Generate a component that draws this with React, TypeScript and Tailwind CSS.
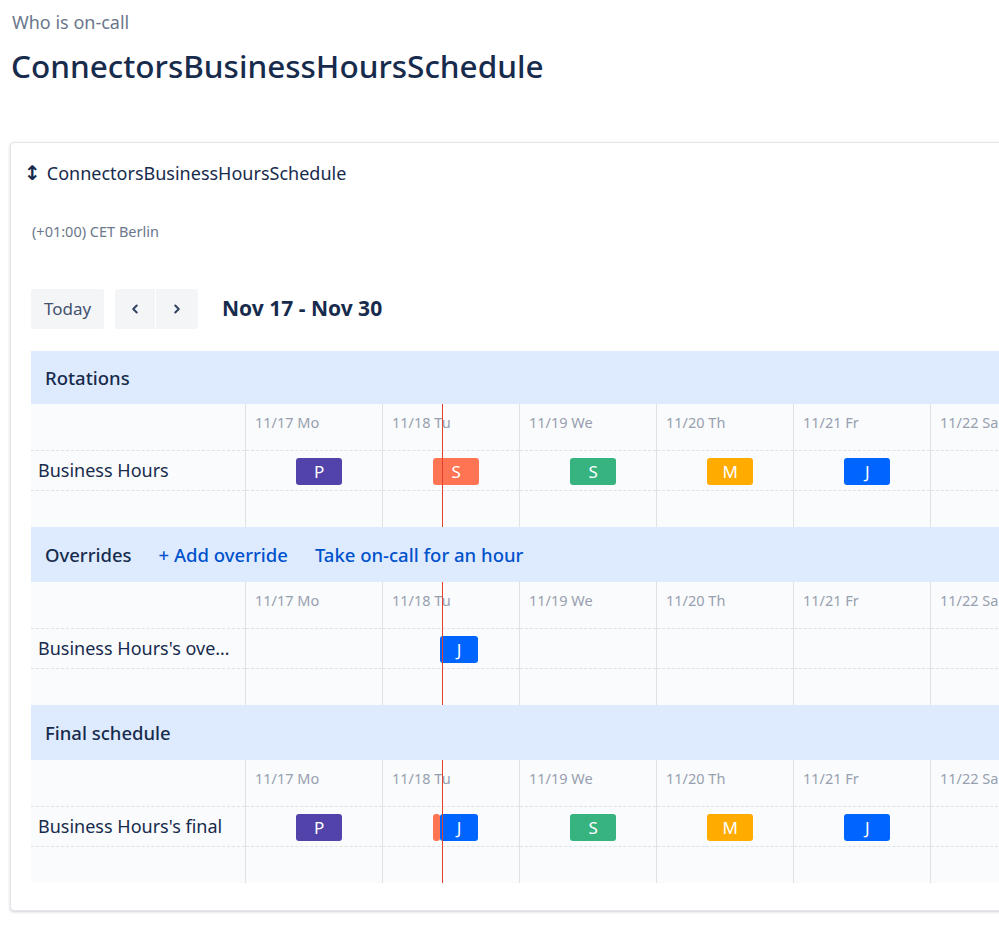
import React from 'react';
import { ChevronLeft, ChevronRight } from 'lucide-react';

const DAY_W = 137;
const HOUR = DAY_W / 24;
const DAYS = ['11/17 Mo', '11/18 Tu', '11/19 We', '11/20 Th', '11/21 Fr', '11/22 Sa', '11/23 Su', '11/24 Mo'];
const NOW_X = 197;

type Block = { left: number; width: number; color: string; label?: string; z?: number };

const business = (letters: { l: string; c: string }[]): Block[] =>
  letters.map((it, i) => ({ left: i * DAY_W + 9 * HOUR, width: 8 * HOUR, color: it.c, label: it.l }));

const ROTATION = business([
  { l: 'P', c: '#5243aa' },
  { l: 'S', c: '#ff7452' },
  { l: 'S', c: '#36b37e' },
  { l: 'M', c: '#ffab00' },
  { l: 'J', c: '#0065ff' },
]);

const FINAL: Block[] = [
  ROTATION[0],
  { left: 9 * HOUR + DAY_W, width: 7, color: '#ff7452' },
  { left: 195, width: 38, color: '#0065ff', label: 'J', z: 1 },
  ROTATION[2],
  ROTATION[3],
  ROTATION[4],
];

const OVERRIDE: Block[] = [{ left: 195, width: 38, color: '#0065ff', label: 'J' }];

const Grid = ({ label, blocks }: { label: string; blocks: Block[] }) => (
  <div className="flex bg-[#fafbfc]">
    <div className="w-[214px] shrink-0">
      <div className="h-[47px] border-b border-dashed border-[#dfe1e6]" />
      <div className="h-[40px] border-b border-dashed border-[#dfe1e6] flex items-center pl-[7px] pr-2 text-[18px] text-[#172b4d]">
        <span className="truncate">{label}</span>
      </div>
      <div className="h-[36px]" />
    </div>
    <div className="relative">
      <div className="flex">
        {DAYS.map((d) => (
          <div key={d} className="border-l border-[#dfe1e6] shrink-0 h-[123px] flex flex-col" style={{ width: DAY_W }}>
            <div className="h-[47px] border-b border-dashed border-[#dfe1e6] pl-[9px] pt-[8px] text-[14.5px] whitespace-nowrap text-[#97a0af]">{d}</div>
            <div className="h-[40px] border-b border-dashed border-[#dfe1e6]" />
          </div>
        ))}
      </div>
      {blocks.map((b, i) => (
        <div
          key={i}
          className="absolute top-[54px] h-[27px] rounded-[3px] flex items-center justify-center text-white text-[17px]"
          style={{ left: b.left, width: b.width, backgroundColor: b.color, zIndex: b.z }}
        >
          {b.label}
        </div>
      ))}
      <div className="absolute top-0 bottom-0 w-px bg-[#e5412b] z-10" style={{ left: NOW_X }} />
    </div>
  </div>
);

const SectionHeader = ({ h, children }: { h: number; children: React.ReactNode }) => (
  <div className="bg-[#deebff] flex items-center gap-[27px] pl-[14px] whitespace-nowrap" style={{ height: h }}>
    {children}
  </div>
);

export default function App() {
  return (
    <div className="w-full h-[930px] overflow-hidden bg-white" style={{ fontFamily: '"Noto Sans", sans-serif' }}>
      <div className="pl-[12px] pt-[9px] text-[18px] leading-[26px] text-[#6b778c]">Who is on-call</div>
      <h1 className="pl-[11px] mt-[12px] text-[31.5px] leading-[38px] font-medium text-[#172b4d] whitespace-nowrap">ConnectorsBusinessHoursSchedule</h1>

      <div className="ml-[10px] mt-[57px] w-[1400px] border border-[#e4e6ea] rounded-[4px] shadow-[0_1px_3px_rgba(9,30,66,0.2)] bg-white pb-[27px]">
        <div className="pt-[18px] pl-[13px] flex items-center gap-[6px] text-[18px] leading-[24px] text-[#172b4d]">
          <span className="text-[20px] leading-[24px] font-bold" style={{ fontFamily: '"DejaVu Sans", sans-serif' }}>↕</span>
          <span>ConnectorsBusinessHoursSchedule</span>
        </div>
        <div className="mt-[37px] pl-[21px] text-[14.5px] leading-[18px] text-[#6b778c]">(+01:00) CET Berlin</div>

        <div className="mt-[49px] pl-[20px] flex items-center">
          <button className="h-[40px] w-[73px] rounded-[3px] bg-[#f4f5f7] text-[17px] text-[#42526e]">Today</button>
          <div className="ml-[11px] flex">
            <button className="h-[40px] w-[40px] rounded-l-[3px] bg-[#f4f5f7] flex items-center justify-center text-[#344563]">
              <ChevronLeft size={14} strokeWidth={3.5} />
            </button>
            <button className="h-[40px] w-[42px] ml-px rounded-r-[3px] bg-[#f4f5f7] flex items-center justify-center text-[#344563]">
              <ChevronRight size={14} strokeWidth={3.5} />
            </button>
          </div>
          <div className="ml-[24px] text-[21px] font-bold text-[#172b4d] whitespace-nowrap">Nov 17 - Nov 30</div>
        </div>

        <div className="mt-[22px] ml-[20px]">
          <SectionHeader h={53}>
            <span className="text-[18.5px] font-medium text-[#172b4d]">Rotations</span>
          </SectionHeader>
          <Grid label="Business Hours" blocks={ROTATION} />
          <SectionHeader h={55}>
            <span className="text-[18.5px] font-medium text-[#172b4d]">Overrides</span>
            <span className="text-[18.5px] font-medium text-[#0052cc]">+ Add override</span>
            <span className="text-[18.5px] font-medium text-[#0052cc]">Take on-call for an hour</span>
          </SectionHeader>
          <Grid label="Business Hours's overrides" blocks={OVERRIDE} />
          <SectionHeader h={55}>
            <span className="text-[18.5px] font-medium text-[#172b4d]">Final schedule</span>
          </SectionHeader>
          <Grid label="Business Hours's final" blocks={FINAL} />
        </div>
      </div>
    </div>
  );
}
